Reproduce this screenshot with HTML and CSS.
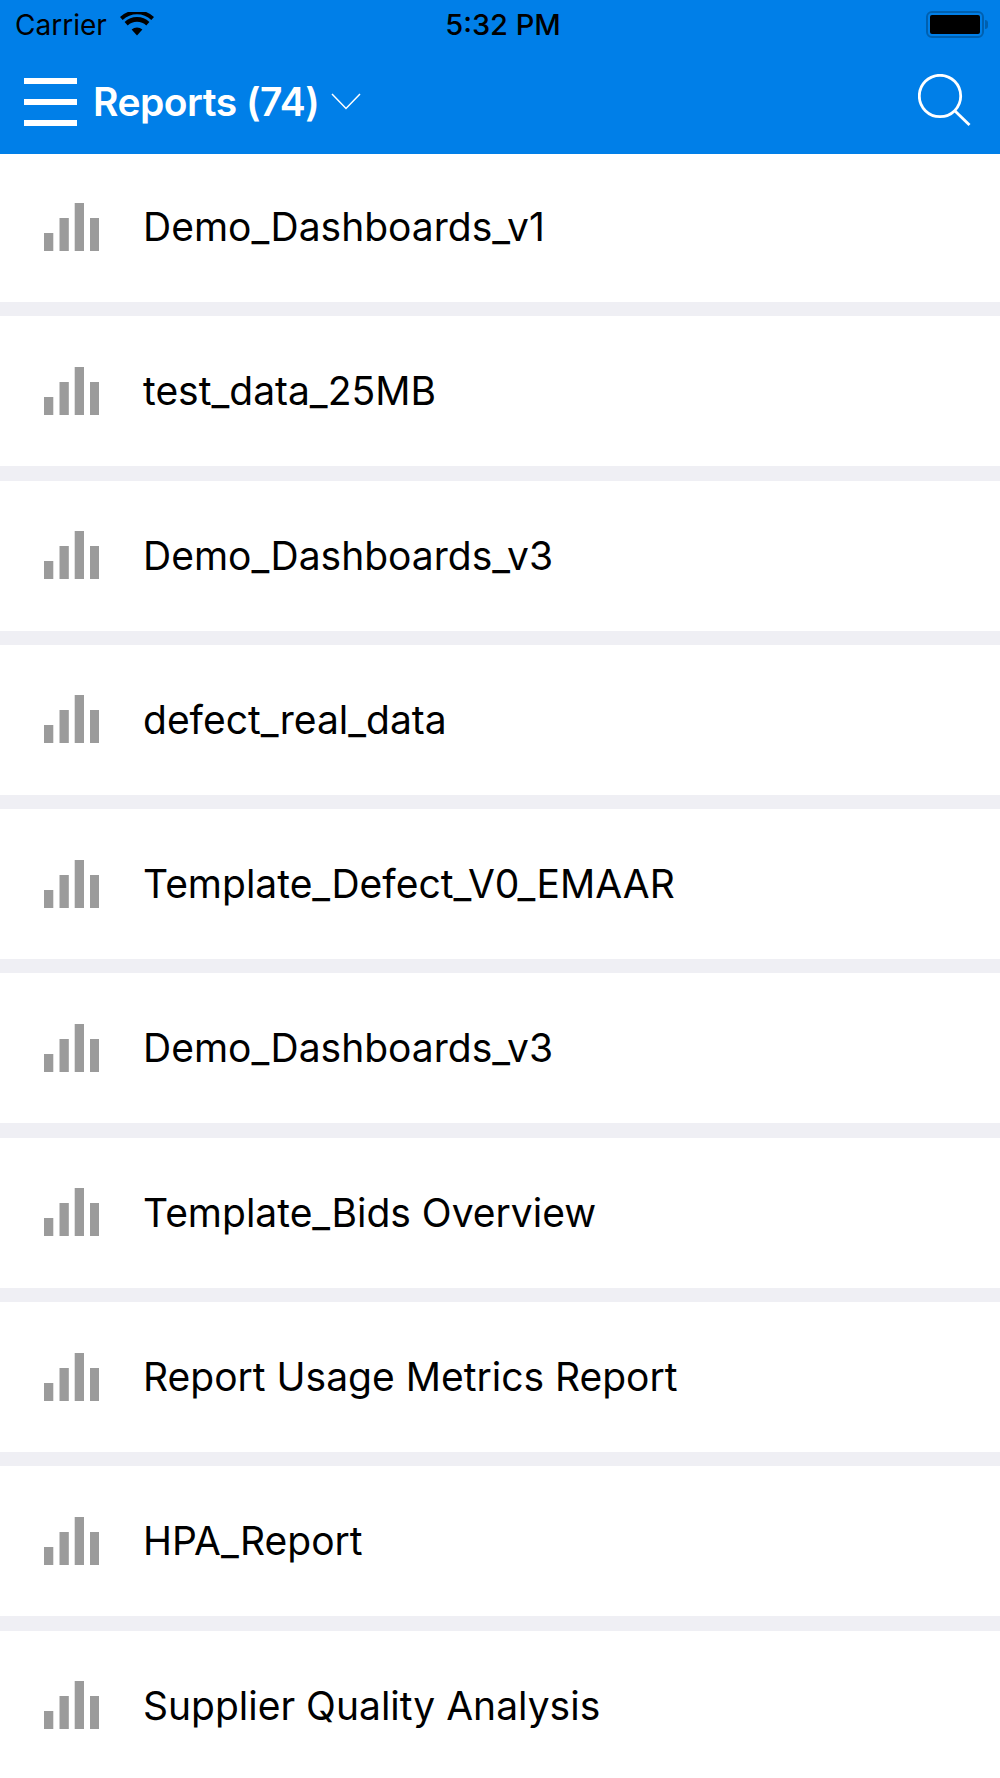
FILE: index.html
```html
<!DOCTYPE html>
<html lang="en">
<head>
<meta charset="utf-8">
<title>Reports</title>
<link rel="stylesheet" href="styles.css">
</head>
<body>
<header class="top">
  <div class="status">
    <div class="status-left">
      <span class="carrier">Carrier</span>
      <svg class="wifi" viewBox="0 0 34 24"><path d="M17 23.500 L11.600 17.600 A8 8 0 0 1 22.400 17.600 Z"/><path d="M7.700 13.400 L4.600 10 A18 18 0 0 1 29.400 10 L26.300 13.400 A13.400 13.400 0 0 0 7.700 13.400 Z"/><path d="M2.700 7.900 L0 5 A25 25 0 0 1 34 5 L31.300 7.900 A21 21 0 0 0 2.700 7.900 Z"/></svg>
    </div>
    <span class="clock">5:32 PM</span>
    <div class="battery"><span class="battery-shell"><span class="battery-fill"></span></span><span class="battery-tip"></span></div>
  </div>
  <div class="nav">
    <div class="nav-left">
      <div class="burger"><span></span><span></span><span></span></div>
      <span class="title">Reports (74)</span>
      <svg class="chev" viewBox="0 0 30 18"><path d="M1 1 L15 15.500 L29 1"/></svg>
    </div>
    <svg class="search" viewBox="0 0 53 52"><circle cx="22" cy="22" r="20.700"/><path d="M36.500 36.500 L51.500 51"/></svg>
  </div>
</header>
<main class="list">
  <div class="row"><svg class="bars" viewBox="0 0 55 48"><rect x="0" y="30" width="9.300" height="18"/><rect x="15.500" y="15" width="9.300" height="33"/><rect x="30.700" y="0" width="9.300" height="48"/><rect x="46" y="15" width="9.300" height="33"/></svg><span class="label">Demo_Dashboards_v1</span></div>
  <div class="row"><svg class="bars" viewBox="0 0 55 48"><rect x="0" y="30" width="9.300" height="18"/><rect x="15.500" y="15" width="9.300" height="33"/><rect x="30.700" y="0" width="9.300" height="48"/><rect x="46" y="15" width="9.300" height="33"/></svg><span class="label">test_data_25MB</span></div>
  <div class="row"><svg class="bars" viewBox="0 0 55 48"><rect x="0" y="30" width="9.300" height="18"/><rect x="15.500" y="15" width="9.300" height="33"/><rect x="30.700" y="0" width="9.300" height="48"/><rect x="46" y="15" width="9.300" height="33"/></svg><span class="label">Demo_Dashboards_v3</span></div>
  <div class="row"><svg class="bars" viewBox="0 0 55 48"><rect x="0" y="30" width="9.300" height="18"/><rect x="15.500" y="15" width="9.300" height="33"/><rect x="30.700" y="0" width="9.300" height="48"/><rect x="46" y="15" width="9.300" height="33"/></svg><span class="label">defect_real_data</span></div>
  <div class="row"><svg class="bars" viewBox="0 0 55 48"><rect x="0" y="30" width="9.300" height="18"/><rect x="15.500" y="15" width="9.300" height="33"/><rect x="30.700" y="0" width="9.300" height="48"/><rect x="46" y="15" width="9.300" height="33"/></svg><span class="label">Template_Defect_V0_EMAAR</span></div>
  <div class="row"><svg class="bars" viewBox="0 0 55 48"><rect x="0" y="30" width="9.300" height="18"/><rect x="15.500" y="15" width="9.300" height="33"/><rect x="30.700" y="0" width="9.300" height="48"/><rect x="46" y="15" width="9.300" height="33"/></svg><span class="label">Demo_Dashboards_v3</span></div>
  <div class="row"><svg class="bars" viewBox="0 0 55 48"><rect x="0" y="30" width="9.300" height="18"/><rect x="15.500" y="15" width="9.300" height="33"/><rect x="30.700" y="0" width="9.300" height="48"/><rect x="46" y="15" width="9.300" height="33"/></svg><span class="label">Template_Bids Overview</span></div>
  <div class="row"><svg class="bars" viewBox="0 0 55 48"><rect x="0" y="30" width="9.300" height="18"/><rect x="15.500" y="15" width="9.300" height="33"/><rect x="30.700" y="0" width="9.300" height="48"/><rect x="46" y="15" width="9.300" height="33"/></svg><span class="label">Report Usage Metrics Report</span></div>
  <div class="row"><svg class="bars" viewBox="0 0 55 48"><rect x="0" y="30" width="9.300" height="18"/><rect x="15.500" y="15" width="9.300" height="33"/><rect x="30.700" y="0" width="9.300" height="48"/><rect x="46" y="15" width="9.300" height="33"/></svg><span class="label">HPA_Report</span></div>
  <div class="row"><svg class="bars" viewBox="0 0 55 48"><rect x="0" y="30" width="9.300" height="18"/><rect x="15.500" y="15" width="9.300" height="33"/><rect x="30.700" y="0" width="9.300" height="48"/><rect x="46" y="15" width="9.300" height="33"/></svg><span class="label">Supplier Quality Analysis</span></div>
</main>
</body>
</html>
```
FILE: styles.css
```css
* { box-sizing: border-box; }
html, body { margin: 0; padding: 0; }
body {
  width: 1000px;
  height: 1778px;
  overflow: hidden;
  background: #efeff4;
  font-family: Inter, "Liberation Sans", sans-serif;
  color: #000;
}
.top { height: 154px; background: #007fe8; display: flex; flex-direction: column; }
.status {
  height: 50px;
  padding: 0 12px 0 15px;
  display: flex;
  align-items: center;
  justify-content: space-between;
  position: relative;
}
.status-left { display: flex; align-items: center; gap: 13px; }
.carrier { font-size: 28px; line-height: 50px; }
.wifi { width: 34px; height: 24px; fill: #000; margin-top: -2px; }
.clock {
  position: absolute;
  left: 6px; right: 0;
  text-align: center;
  font-size: 29px;
  font-weight: 500;
  line-height: 50px;
}
.battery { display: flex; align-items: center; margin-top: -2px; }
.battery-shell {
  width: 58px; height: 27px;
  border: 2px solid #0060af;
  border-radius: 6px;
  padding: 2px;
  display: block;
}
.battery-fill { display: block; width: 100%; height: 100%; background: #000; border-radius: 2px; }
.battery-tip { width: 3px; height: 9px; background: #0060af; border-radius: 0 3px 3px 0; margin-left: 1px; }
.nav {
  flex: 1;
  padding: 0 29px 0 24px;
  display: flex;
  align-items: center;
  justify-content: space-between;
}
.nav-left { display: flex; align-items: center; }
.burger {
  width: 53px; height: 48px;
  display: flex; flex-direction: column; justify-content: space-between;
}
.burger span { display: block; height: 6px; background: #fff; }
.title { margin-left: 16px; font-size: 39px; font-weight: 600; color: #fff; letter-spacing: -0.5px; line-height: 48px; }
.chev { width: 30px; height: 18px; margin-left: 12px; fill: none; stroke: #fff; stroke-width: 1.500; }
.search { width: 53px; height: 52px; margin-top: -4px; fill: none; stroke: #fff; stroke-width: 2.800; }
.list { display: flex; flex-direction: column; gap: 14.300px; }
.row {
  height: 150px;
  background: #fff;
  display: flex;
  align-items: center;
  padding-left: 44px;
  flex-shrink: 0;
}
.row:first-child { height: 148px; padding-bottom: 2px; }
.bars { width: 55px; height: 48px; fill: #9b9b9b; flex-shrink: 0; margin-bottom: 1px; }
.label { margin-left: 44px; font-size: 39px; line-height: 48px; }
```
